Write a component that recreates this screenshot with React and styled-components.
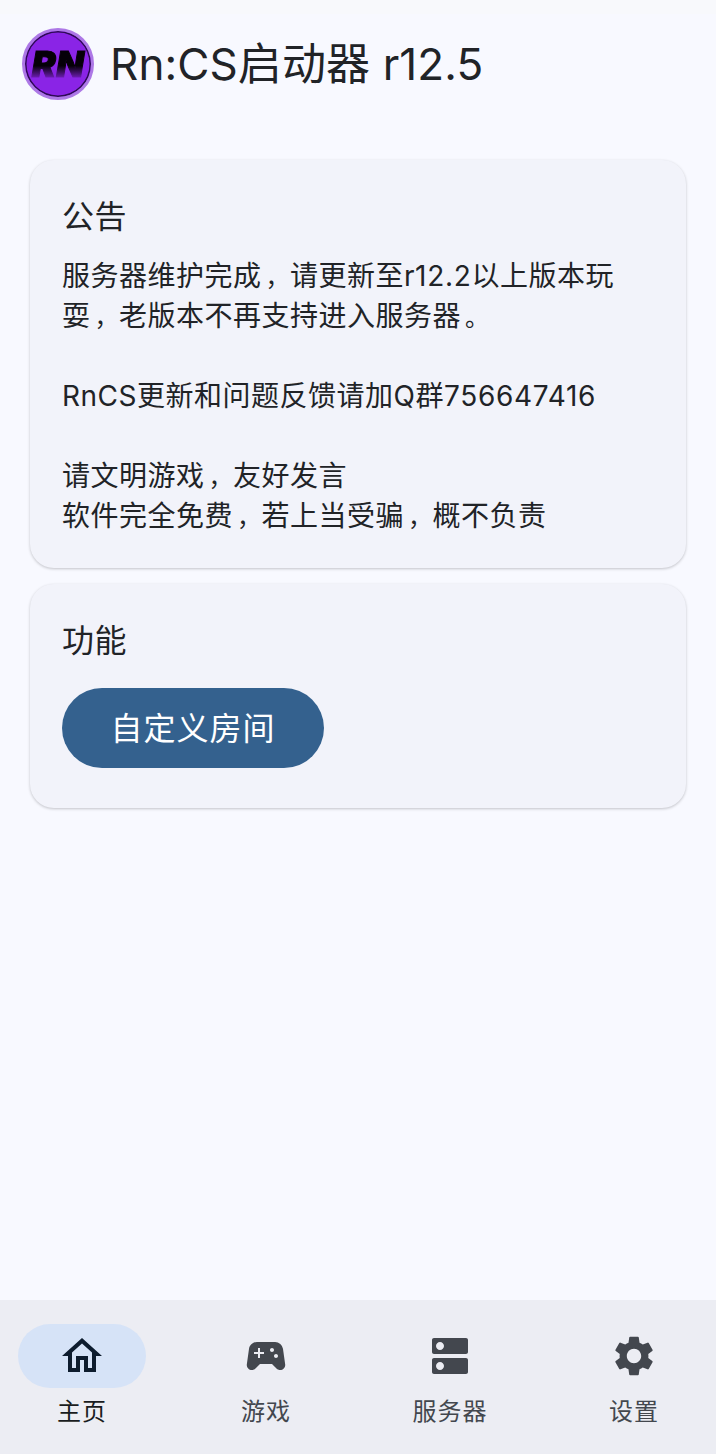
import React from 'react';
import styled, { createGlobalStyle } from 'styled-components';
import { MdOutlineHome, MdSportsEsports, MdDns, MdSettings } from 'react-icons/md';

const GlobalStyle = createGlobalStyle`
  html, body {
    margin: 0;
    padding: 0;
    background: #f8f9ff;
  }
  * {
    box-sizing: border-box;
  }
`;

const navItems = [
  { label: '主页', icon: MdOutlineHome, active: true },
  { label: '游戏', icon: MdSportsEsports },
  { label: '服务器', icon: MdDns },
  { label: '设置', icon: MdSettings },
];

const noticeLines = [
  '服务器维护完成，请更新至r12.2以上版本玩',
  '耍，老版本不再支持进入服务器。',
  '',
  'RnCS更新和问题反馈请加Q群756647416',
  '',
  '请文明游戏，友好发言',
  '软件完全免费，若上当受骗，概不负责',
];

// punctuation is smaller and sits further right in its cell than the CJK font puts it
function renderLine(line) {
  return line.split(/([，。]|[0-9.]+)/).filter(Boolean).map((part, i) => {
    if (part === '，' || part === '。') return <Punct key={i}>{part}</Punct>;
    if (/^[0-9.]+$/.test(part)) return <Digits key={i}>{part}</Digits>;
    return <span key={i}>{part}</span>;
  });
}

export default function App() {
  return (
    <Page>
      <GlobalStyle />
      <StatusBand />
      <Header>
        <Avatar>
          <AvatarText>RN</AvatarText>
        </Avatar>
        <Title>Rn:CS启动器 r12.5</Title>
      </Header>

      <Content>
        <Card>
          <CardTitle>公告</CardTitle>
          <Notice>
            {noticeLines.map((line, i) => (
              <NoticeLine key={i}>{renderLine(line)}</NoticeLine>
            ))}
          </Notice>
        </Card>

        <Card $bottom={40}>
          <CardTitle>功能</CardTitle>
          <PrimaryButton type="button">自定义房间</PrimaryButton>
        </Card>
      </Content>

      <BottomNav>
        {navItems.map(({ label, icon: Icon, active }) => (
          <NavItem key={label}>
            <NavPill $active={active}>
              <Icon size={48} />
            </NavPill>
            <NavLabel $active={active}>{label}</NavLabel>
          </NavItem>
        ))}
      </BottomNav>
    </Page>
  );
}

const Page = styled.div`
  width: 716px;
  height: 1454px;
  display: flex;
  flex-direction: column;
  background: #f8f9ff;
  color: #212327;
  font-family: Inter, Roboto, "Noto Sans CJK SC", sans-serif;
  overflow: hidden;
`;

const StatusBand = styled.div`
  height: 14px;
  background: #f8f9fc;
`;

const Header = styled.header`
  display: flex;
  align-items: center;
  gap: 16px;
  height: 100px;
  padding: 0 0 0 22px;
`;

const Avatar = styled.div`
  width: 72px;
  height: 72px;
  display: flex;
  align-items: center;
  justify-content: center;
  border-radius: 50%;
  background: #8a24e6;
  border: 3px solid #ad78e6;
  box-shadow: inset 0 0 0 1.5px #2c0b52;
`;

const AvatarText = styled.span`
  display: block;
  font-family: Inter, "Liberation Sans", sans-serif;
  font-size: 36px;
  line-height: 36px;
  font-weight: 900;
  font-style: italic;
  letter-spacing: 0.5px;
  padding: 0 2px;
  -webkit-text-stroke: 1px transparent;
  background: linear-gradient(180deg, #050008 0%, #050008 55%, #7a20c8 92%);
  -webkit-background-clip: text;
  background-clip: text;
  color: transparent;
`;

const Title = styled.h1`
  margin: 0;
  font-size: 44px;
  font-weight: 400;
  line-height: 56px;
  letter-spacing: 0.1px;
`;

const Content = styled.main`
  flex: 1;
  display: flex;
  flex-direction: column;
  gap: 16px;
  padding: 46px 30px 0;
`;

const Card = styled.section`
  display: flex;
  flex-direction: column;
  align-items: flex-start;
  gap: 16px;
  padding: 32px 32px ${({ $bottom }) => $bottom || 32}px;
  border-radius: 24px;
  background: #f2f3fa;
  box-shadow: 0 1px 3px rgba(0, 0, 0, 0.22);
`;

const CardTitle = styled.h2`
  margin: 0;
  padding-top: 1px;
  font-size: 32px;
  font-weight: 400;
  line-height: 47px;
  letter-spacing: 0.5px;
`;

const Notice = styled.div`
  width: 100%;
  font-size: 28px;
  line-height: 40px;
  letter-spacing: 0.5px;
`;

const NoticeLine = styled.div`
  height: 40px;
`;

const Punct = styled.span`
  padding-left: 4px;
  font-size: 24px;
  line-height: 0;
`;

const Digits = styled.span`
  letter-spacing: 0.7px;
`;

const PrimaryButton = styled.button`
  width: 262px;
  height: 80px;
  margin-top: 8px;
  padding: 0 0 4px;
  border: none;
  border-radius: 40px;
  background: #34618e;
  color: #fff;
  font-family: inherit;
  font-size: 32px;
  font-weight: 400;
  letter-spacing: 1px;
`;

const BottomNav = styled.nav`
  height: 154px;
  display: flex;
  justify-content: space-between;
  padding: 24px 18px 0;
  background: #ecedf3;
`;

const NavItem = styled.div`
  width: 128px;
  display: flex;
  flex-direction: column;
  align-items: center;
  gap: 8px;
`;

const NavPill = styled.div`
  width: 128px;
  height: 64px;
  display: flex;
  align-items: center;
  justify-content: center;
  border-radius: 32px;
  background: ${({ $active }) => ($active ? '#d6e3f7' : 'transparent')};
  color: ${({ $active }) => ($active ? '#0d1c2e' : '#43474e')};
`;

const NavLabel = styled.span`
  font-size: 24px;
  line-height: 32px;
  letter-spacing: 1px;
  color: ${({ $active }) => ($active ? '#191c20' : '#43474e')};
`;
